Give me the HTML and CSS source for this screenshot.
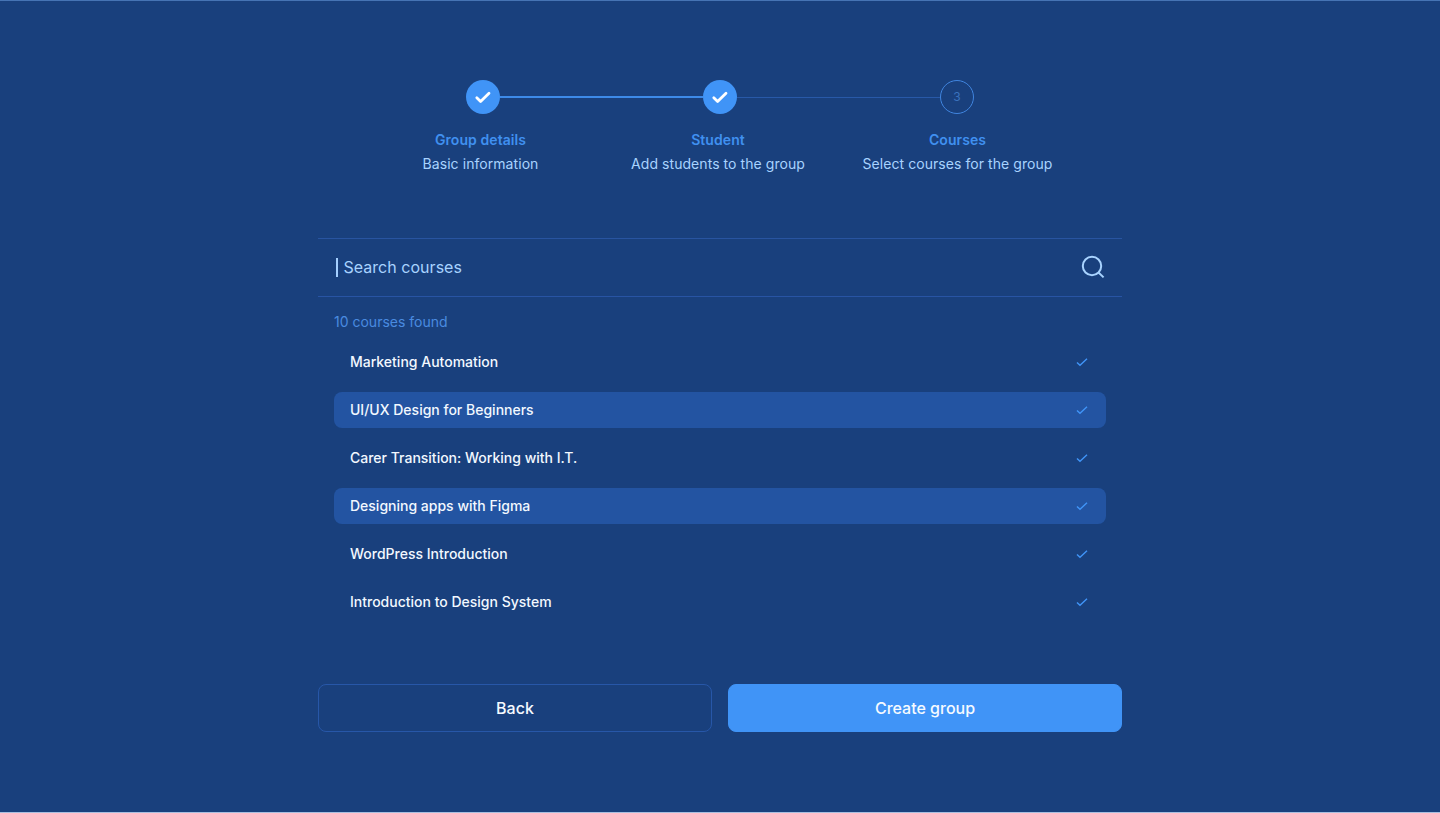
FILE: index.html
```html
<!DOCTYPE html>
<html lang="en">
<head>
<meta charset="utf-8">
<title>Create group</title>
<link rel="stylesheet" href="styles.css">
</head>
<body>
<main class="page">
  <section class="stepper">
    <div class="rail">
      <span class="dot dot-done"><svg width="34" height="34" viewBox="0 0 34 34"><path d="M10.8 17.8l3.8 3.7L23 13.2"/></svg></span>
      <span class="line line-done"></span>
      <span class="dot dot-done"><svg width="34" height="34" viewBox="0 0 34 34"><path d="M10.8 17.8l3.8 3.7L23 13.2"/></svg></span>
      <span class="line"></span>
      <span class="dot dot-next">3</span>
    </div>
    <div class="labels">
      <div><h2 class="title">Group details</h2><p class="sub">Basic information</p></div>
      <div><h2 class="title">Student</h2><p class="sub">Add students to the group</p></div>
      <div><h2 class="title">Courses</h2><p class="sub">Select courses for the group</p></div>
    </div>
  </section>
  <section class="panel">
    <div class="search">
      <span class="caret"></span>
      <span class="placeholder">Search courses</span>
      <svg class="search-icon" width="24" height="24" viewBox="0 0 24 24"><circle cx="11" cy="11" r="9.2"/><path d="M17.2 17.2l5.4 5.2"/></svg>
    </div>
    <p class="found">10 courses found</p>
    <ul class="list">
      <li class="item"><span>Marketing Automation</span><svg class="tick" width="12" height="10" viewBox="0 0 12 10"><path d="M1 5.4l3 2.9 7-6.5"/></svg></li>
      <li class="item selected"><span>UI/UX Design for Beginners</span><svg class="tick" width="12" height="10" viewBox="0 0 12 10"><path d="M1 5.4l3 2.9 7-6.5"/></svg></li>
      <li class="item"><span>Carer Transition: Working with I.T.</span><svg class="tick" width="12" height="10" viewBox="0 0 12 10"><path d="M1 5.4l3 2.9 7-6.5"/></svg></li>
      <li class="item selected"><span>Designing apps with Figma</span><svg class="tick" width="12" height="10" viewBox="0 0 12 10"><path d="M1 5.4l3 2.9 7-6.5"/></svg></li>
      <li class="item"><span>WordPress Introduction</span><svg class="tick" width="12" height="10" viewBox="0 0 12 10"><path d="M1 5.4l3 2.9 7-6.5"/></svg></li>
      <li class="item"><span>Introduction to Design System</span><svg class="tick" width="12" height="10" viewBox="0 0 12 10"><path d="M1 5.4l3 2.9 7-6.5"/></svg></li>
    </ul>
  </section>
  <div class="actions">
    <button class="btn btn-back">Back</button>
    <button class="btn btn-create">Create group</button>
  </div>
</main>
</body>
</html>
```
FILE: styles.css
```css
* { box-sizing: border-box; margin: 0; padding: 0; }
body { background: #19407d; font-family: Inter, "Liberation Sans", sans-serif; overflow: hidden; }
.page { height: 813px; padding-top: 79px; border-top: 1px solid #4674b4; border-bottom: 1px solid #a9bfe0; }
svg { display: block; fill: none; }

.stepper { height: 158px; }
.rail { display: flex; align-items: center; width: 508px; margin-left: 466px; }
.dot { width: 34px; height: 34px; border-radius: 50%; flex: none; }
.dot-done { background: #4094f7; }
.dot-done path { stroke: #fff; stroke-width: 2.8; stroke-linecap: round; stroke-linejoin: round; }
.dot-next { border: 1px solid #4085df; color: #3b72bd; font-size: 12px; line-height: 32px; text-align: center; }
.line { flex: 1; height: 1px; background: #2859a8; }
.line-done { height: 2px; background: #3d8ae8; }
.labels { display: grid; grid-template-columns: 237px 238px 241px; margin: 14px 0 0 362px; text-align: center; }
.title { font-size: 14px; font-weight: 600; line-height: 24px; letter-spacing: 0.08px; color: #4090f0; }
.sub { font-size: 14px; line-height: 24px; letter-spacing: 0.06px; color: #a8d3ff; }

.panel { width: 804px; margin-left: 318px; height: 446px; }
.search { display: flex; align-items: center; height: 59px; padding: 0 17px 1px 18px; border-top: 1px solid #2854a0; border-bottom: 1px solid #2854a4; }
.caret { width: 1.5px; height: 19px; margin-right: 6px; background: #a4cfff; }
.placeholder { font-size: 16px; line-height: 24px; letter-spacing: 0.03px; color: #a8d3ff; }
.search-icon { margin-left: auto; stroke: #a8d3ff; stroke-width: 2; }
.found { margin: 13px 0 0 16px; font-size: 14px; line-height: 24px; color: #4a8be0; }
.list { display: grid; gap: 12px; margin: 10px 16px 0; list-style: none; }
.item { display: flex; align-items: center; justify-content: space-between; height: 36px; padding: 0 18px 0 16px; border-radius: 8px; font-size: 14px; line-height: 18px; font-weight: 500; color: #f2f8ff; }
.selected { background: #2354a2; }
.tick { stroke: #4094f7; stroke-width: 1.4; }

.actions { display: grid; grid-template-columns: 394px 394px; gap: 16px; margin-left: 318px; }
.btn { height: 48px; border: 1px solid #2757a8; border-radius: 8px; background: none; color: #f5faff; font: 500 16px Inter, sans-serif; }
.btn-create { background: #4094f7; border-color: #4094f7; }
```
